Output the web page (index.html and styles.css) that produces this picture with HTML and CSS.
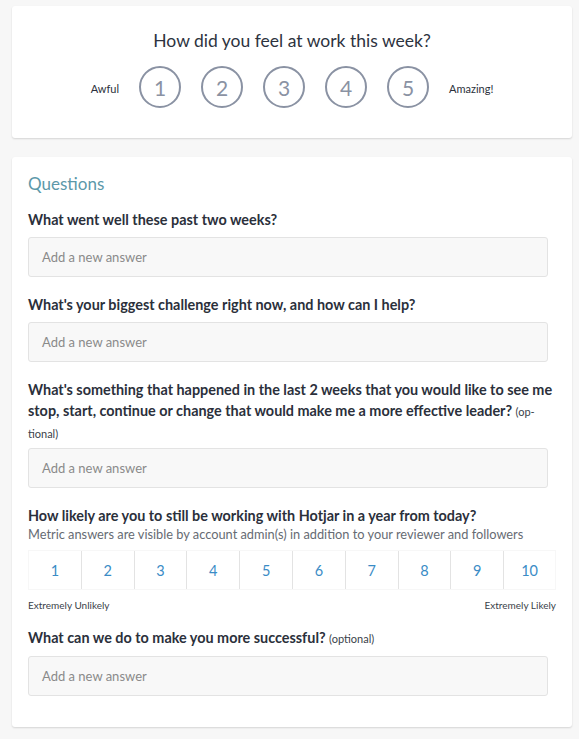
FILE: index.html
```html
<!DOCTYPE html>
<html>
<head>
<meta charset="utf-8">
<link rel="stylesheet" href="styles.css">
</head>
<body>
<div class="page">
  <section class="card mood">
    <h1 class="mood-title">How did you feel at work this week?</h1>
    <div class="mood-row">
      <span class="mood-label">Awful</span>
      <span class="mood-circle">1</span>
      <span class="mood-circle">2</span>
      <span class="mood-circle">3</span>
      <span class="mood-circle">4</span>
      <span class="mood-circle">5</span>
      <span class="mood-label">Amazing!</span>
    </div>
  </section>

  <section class="card questions">
    <h2 class="section-title">Questions</h2>

    <div class="question">
      <div class="q-label">What went well these past two weeks?</div>
      <div class="answer">Add a new answer</div>
    </div>

    <div class="question">
      <div class="q-label">What's your biggest challenge right now, and how can I help?</div>
      <div class="answer">Add a new answer</div>
    </div>

    <div class="question">
      <div class="q-label q-long">What's something that happened in the last 2 weeks that you would like to see me stop, start, continue or change that would make me a more effective leader? <span class="optional">(op&shy;tional)</span></div>
      <div class="answer">Add a new answer</div>
    </div>

    <div class="question metric">
      <div class="q-label">How likely are you to still be working with Hotjar in a year from today?</div>
      <div class="q-sub">Metric answers are visible by account admin(s) in addition to your reviewer and followers</div>
      <div class="scale">
        <span class="scale-cell">1</span>
        <span class="scale-cell">2</span>
        <span class="scale-cell">3</span>
        <span class="scale-cell">4</span>
        <span class="scale-cell">5</span>
        <span class="scale-cell">6</span>
        <span class="scale-cell">7</span>
        <span class="scale-cell">8</span>
        <span class="scale-cell">9</span>
        <span class="scale-cell">10</span>
      </div>
      <div class="scale-labels">
        <span>Extremely Unlikely</span>
        <span>Extremely Likely</span>
      </div>
    </div>

    <div class="question last">
      <div class="q-label">What can we do to make you more successful? <span class="optional">(optional)</span></div>
      <div class="answer">Add a new answer</div>
    </div>
  </section>
</div>
</body>
</html>
```

FILE: styles.css
```css
html, body {
  margin: 0;
  padding: 0;
  background: #f7f7f7;
}
body {
  font-family: Lato, "Liberation Sans", Arial, sans-serif;
  color: #2b303b;
}
.page {
  padding: 6px 7px 12px 12px;
  display: flex;
  flex-direction: column;
  gap: 19px;
}
.card {
  background: #fff;
  border-radius: 3px;
  box-shadow: 0 1px 2px rgba(0, 0, 0, 0.14);
}

/* mood card */
.mood {
  height: 132px;
  box-sizing: border-box;
  padding-top: 23px;
  display: flex;
  flex-direction: column;
  align-items: center;
}
.mood-title {
  margin: 0;
  font-size: 17.5px;
  line-height: 24px;
  font-weight: 400;
  color: #2d3340;
}
.mood-row {
  margin-top: 13px;
  display: flex;
  align-items: center;
  gap: 20px;
}
.mood-label {
  font-size: 11px;
  color: #2b303b;
  padding-top: 2px;
}
.mood-circle {
  width: 42px;
  height: 42px;
  box-sizing: border-box;
  border: 2px solid #8a92a3;
  border-radius: 50%;
  display: flex;
  align-items: center;
  justify-content: center;
  font-size: 21px;
  font-weight: 400;
  color: #8a92a3;
}

/* questions card */
.questions {
  padding: 15px 16px 15px 16px;
}
.section-title {
  margin: 0 0 13px 0;
  font-size: 17px;
  line-height: 24px;
  font-weight: 400;
  color: #5c98a9;
}
.question {
  margin-bottom: 17px;
}
.question.metric {
  margin-bottom: 15px;
}
.question.last {
  margin-bottom: 16px;
}
.q-label {
  font-size: 14.4px;
  line-height: 21px;
  font-weight: 700;
  color: #2b303b;
  margin-bottom: 7px;
}
.q-label.q-long {
  margin-bottom: 4px;
}
.optional {
  font-size: 11px;
  font-weight: 400;
  color: #3a3f4a;
}
.answer {
  margin-right: 8px;
  height: 40px;
  box-sizing: border-box;
  border: 1px solid #e3e3e3;
  border-radius: 3px;
  background: #f8f8f8;
  padding-left: 13px;
  display: flex;
  align-items: center;
  font-size: 13px;
  color: #8a8a8a;
}
.q-sub {
  margin-top: -7px;
  font-size: 12.8px;
  line-height: 16px;
  color: #666b73;
  margin-bottom: 8px;
}
.scale {
  display: grid;
  grid-template-columns: repeat(10, 1fr);
  height: 40px;
  box-sizing: border-box;
  border-top: 1px solid #f7f7f7;
  border-bottom: 1px solid #f7f7f7;
}
.scale-cell {
  display: flex;
  align-items: center;
  justify-content: center;
  font-size: 14.5px;
  color: #3a8cc6;
  border-left: 1px solid #e3e3e3;
}
.scale-cell:first-child {
  border-left: 1px solid #f7f7f7;
}
.scale-cell:last-child {
  border-right: 1px solid #f7f7f7;
}
.scale-labels {
  margin-top: 8px;
  display: flex;
  justify-content: space-between;
  font-size: 10px;
  line-height: 14px;
  color: #3a3f4a;
}
```
